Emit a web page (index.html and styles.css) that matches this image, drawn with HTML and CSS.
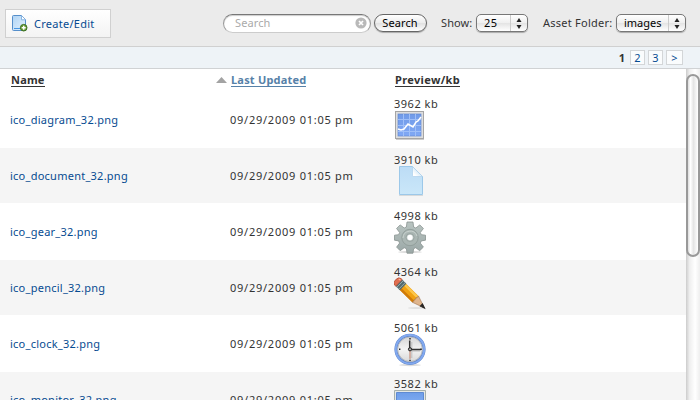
FILE: index.html
```html
<!DOCTYPE html>
<html lang="en">
<head>
<meta charset="utf-8">
<title>Assets</title>
<link rel="stylesheet" href="styles.css">
</head>
<body>
<div class="toolbar">
  <a class="create">
    <svg width="16" height="17" viewBox="0 0 16 17"><defs><linearGradient id="pg" x2="1" y2="1"><stop stop-color="#b0d4f4"/><stop offset="1" stop-color="#e2f1ff"/></linearGradient></defs><path d="M.5 1.5q0-1 1-1h8l4 4v11h-12q-1 0-1-1z" fill="url(#pg)" stroke="#568fcb"/><path d="M9.5.8v4h4" fill="#fff" stroke="#87b6e4"/><path d="M2 13.5h7" stroke="#4796e3"/><circle cx="11.7" cy="12.7" r="3.3" fill="#6b9e3a" stroke="#3c7022"/><path d="M9.7 12.7h4M11.7 10.7v4" stroke="#fff" stroke-width="1.4"/></svg>
    <span>Create/Edit</span>
  </a>
  <div class="search"><span>Search</span><svg width="12" height="12" viewBox="0 0 12 12"><circle cx="6" cy="6" r="5.6" fill="#b9b9b9"/><path d="M4 4l4 4M8 4L4 8" stroke="#fff" stroke-width="1.7"/></svg></div>
  <div class="button">Search</div>
  <span class="label show">Show:</span>
  <div class="select count"><span>25</span><i><svg width="6" height="11" viewBox="0 0 6 11"><path d="M.5 4L3 0l2.5 4zM.5 7L3 11l2.5-4z" fill="#222"/></svg></i></div>
  <span class="label folder">Asset Folder:</span>
  <div class="select images"><span>images</span><i><svg width="6" height="11" viewBox="0 0 6 11"><path d="M.5 4L3 0l2.5 4zM.5 7L3 11l2.5-4z" fill="#222"/></svg></i></div>
</div>
<div class="pager"><b>1</b><a>2</a><a>3</a><a>&gt;</a></div>
<div class="main">
  <div class="table">
    <div class="head">
      <div class="name"><span class="h-name">Name</span></div>
      <div class="date"><svg width="11" height="6" viewBox="0 0 11 6"><path d="M0 6L5.5 0 11 6z" fill="#a3a3a3"/></svg><span class="h-date">Last Updated</span></div>
      <div class="preview"><span class="h-preview">Preview/kb</span></div>
    </div>
    <div class="row"><div class="name">ico_diagram_32.png</div><div class="date">09/29/2009 01:05 pm</div><div class="preview"><span>3962 kb</span>
      <svg width="32" height="32" viewBox="0 0 32 32"><defs><linearGradient id="dg" x2="0" y2="1"><stop stop-color="#719be8"/><stop offset="1" stop-color="#80a8f4"/></linearGradient></defs><rect x="1.5" y="2.5" width="28" height="27" fill="#dedede" stroke="#a5a5a5"/><rect x="4" y="5" width="23" height="22" fill="url(#dg)" stroke="#668bd0" stroke-width=".7"/><path d="M9.5 5v22M15.5 5v22M21.5 5v22M4 10.5h23M4 16.5h23M4 22.5h23" stroke="#9fbff8"/><path d="M4 20l3 1 3-1 4-5 5 3 3-5 2-1 3-4" fill="none" stroke="#fff" stroke-width="1.5"/><path d="M2 30.5h28" stroke="#ccc"/></svg></div></div>
    <div class="row odd"><div class="name">ico_document_32.png</div><div class="date">09/29/2009 01:05 pm</div><div class="preview"><span>3910 kb</span>
      <svg width="32" height="32" viewBox="0 0 32 32"><defs><linearGradient id="doc" x2="0" y2="1"><stop stop-color="#bcdcf5"/><stop offset="1" stop-color="#cae7f9"/></linearGradient><linearGradient id="fold" x1=".2" y1=".8" x2=".8" y2=".2"><stop stop-color="#fff"/><stop offset="1" stop-color="#bcdcf2"/></linearGradient></defs><path d="M5.5 1.5h13l10 10v18h-23z" fill="url(#doc)" stroke="#9cc8e9"/><path d="M18.5 1.5l10 10h-9q-1 0-1-1z" fill="url(#fold)" stroke="#add0eb" stroke-width=".7"/><path d="M5 30.5h24" stroke="#d7dadb"/></svg></div></div>
    <div class="row"><div class="name">ico_gear_32.png</div><div class="date">09/29/2009 01:05 pm</div><div class="preview"><span>4998 kb</span>
      <svg width="32" height="34" viewBox="0 0 32 34"><defs><linearGradient id="gear" x2="0" y2="1"><stop stop-color="#b9c4c1"/><stop offset="1" stop-color="#9ba8a7"/></linearGradient></defs><ellipse cx="16" cy="31" rx="12" ry="1.2" fill="#ddd"/><path d="M13 1h6l.6 5 2.2 1 4-3.1 3.6 3.6-3.1 4 1 2.2 4.2.5v5l-4.2.7-1 2.2 3.1 4-3.7 3.6-4-3-2.1 1-.6 4.5h-6l-.6-4.5-2.2-1-4 3-3.6-3.6 3-4-1-2.2-4.1-.7v-5l4.1-.5 1-2.2-3-4 3.6-3.6 4 3.1 2.2-1z" fill="url(#gear)" stroke="#899390" stroke-width=".8"/><circle cx="16" cy="16.5" r="8.2" fill="#aab6b3" stroke="#8d9996" stroke-width=".8"/><path d="M9 17a7.2 7.2 0 0 1 14-2" fill="none" stroke="#c9d2cf"/><circle cx="16" cy="16.5" r="4" fill="#b9c4c1" stroke="#8e9996" stroke-width=".7"/><circle cx="16" cy="16.5" r="2.7" fill="#fff"/></svg></div></div>
    <div class="row odd"><div class="name">ico_pencil_32.png</div><div class="date">09/29/2009 01:05 pm</div><div class="preview"><span>4364 kb</span>
      <svg width="32" height="33" viewBox="0 0 32 33"><ellipse cx="22" cy="31" rx="8" ry="1" fill="#e1e1e1"/><g transform="translate(3.9 4.9) rotate(44.5)"><path d="M6 -4.4h18.5v8.8H6z" fill="#f0a112"/><path d="M6-4h18.5v2.4H6z" fill="#fcc64a"/><path d="M6 2h18.5v2.4H6z" fill="#cf7a0a"/><path d="M24.5-4.4L37.2 0 24.5 4.4q1.2-2-.4-3 1.4-1.3 0-2.8 1.4-1.5.4-3z" fill="#dfb58d" stroke="#93633c" stroke-width=".5"/><path d="M33-1.5L37.4 0 33 1.5z" fill="#252525" stroke="#252525"/><rect x="1.3" y="-4.6" width="6" height="9.2" fill="#536c70"/><path d="M3-4.6v9.2M5.7-4.6v9.2" stroke="#a6b5b4" stroke-width=".8"/><path d="M1.4-4.6H0Q-3.2-4.4-3.2 0T0 4.6h1.4z" fill="#df6e50" stroke="#ac442c" stroke-width=".6"/><path d="M-1.5-2.7L.7-3" stroke="#ffb69b" stroke-width="1.2"/></g></svg></div></div>
    <div class="row"><div class="name">ico_clock_32.png</div><div class="date">09/29/2009 01:05 pm</div><div class="preview"><span>5061 kb</span>
      <svg width="33" height="34" viewBox="0 0 33 34"><defs><linearGradient id="face" x2="0" y2="1"><stop stop-color="#d2d2d2"/><stop offset=".5" stop-color="#f4f4f4"/><stop offset="1" stop-color="#d5d5d5"/></linearGradient></defs><ellipse cx="16" cy="32" rx="11" ry="1.2" fill="#ddd"/><circle cx="16" cy="16.3" r="14.1" fill="url(#face)" stroke="#5d83c8" stroke-width="3"/><circle cx="16" cy="16.3" r="14.2" fill="none" stroke="#82a9ef" stroke-width="2"/><circle cx="16" cy="16.3" r="12.3" fill="none" stroke="#a5a9af" stroke-width=".7"/><path d="M17.8 9v16M18 18h8" stroke="#bcbcbc"/><path d="M16 16.3v9.5" stroke="#bd7860"/><path d="M15.7 7.5v9H27" fill="none" stroke="#333" stroke-width="1.5"/><circle cx="16" cy="16.3" r="1.6" fill="#aaa" stroke="#222"/><path d="M15.3 5h1.4v1.4h-1.4zM15.3 26.7h1.4v1.4h-1.4zM5 15.6h1.4V17H5zM26.4 15.6h1.4V17h-1.4z" fill="#222"/></svg></div></div>
    <div class="row odd"><div class="name">ico_monitor_32.png</div><div class="date">09/29/2009 01:05 pm</div><div class="preview"><span>3582 kb</span>
      <svg width="32" height="32" viewBox="0 0 32 32"><defs><linearGradient id="mon" x2="0" y2="1"><stop stop-color="#6d9de9"/><stop offset="1" stop-color="#8fb9fa"/></linearGradient></defs><path d="M.5 1.5h31v24H.5z" fill="#e4e8e5" stroke="#a6b0ac"/><path d="M2.5 3.5h27v20h-27z" fill="url(#mon)" stroke="#5e8ad2"/></svg></div></div>
  </div>
  <div class="scrollbar"><div class="thumb"></div></div>
</div>
</body>
</html>
```
FILE: styles.css
```css
* { box-sizing: border-box; }
body {
  margin: 0; width: 700px; height: 400px; overflow: hidden;
  background: #fff; color: #333;
  font: 11px/14px "Noto Sans", "Open Sans", sans-serif;
  display: flex; flex-direction: column;
}
svg { display: block; flex: none; }
.toolbar {
  height: 47px; flex: none; display: flex; align-items: center;
  background: #ebebeb; border-bottom: 1px solid #d0d0d0; padding-left: 5px;
}
.create {
  width: 106px; height: 29px; flex: none; display: flex; align-items: center; gap: 6px;
  margin-top: 1px; padding-left: 6px; border: 1px solid #d0d0d0;
  background: linear-gradient(#fff, #f3f3f3); color: #064b91; letter-spacing: .27px;
}
.search {
  width: 148px; height: 19px; flex: none; margin-left: 112px; padding: 0 3px 0 11px;
  display: flex; align-items: center; justify-content: space-between;
  border: 1px solid #999; border-top-color: #777; border-bottom-color: #ccc; border-radius: 10px;
  background: #fff; box-shadow: inset 0 1px 1px #ccc; color: #aaa; letter-spacing: .1px;
}
.button {
  width: 53px; height: 18px; flex: none; margin-left: 2.5px;
  border: 1px solid #666; border-radius: 9px; line-height: 16px; text-align: center;
  background: linear-gradient(#fff, #ededed 48%, #e1e1e1 52%, #fff);
  box-shadow: 0 1px 1px #aaa; color: #000; letter-spacing: .1px;
}
.label { flex: none; white-space: nowrap; letter-spacing: .25px; }
.show { width: 31px; margin-left: 14.5px; letter-spacing: .1px; }
.folder { width: 69px; margin-left: 15px; }
.select {
  height: 18px; flex: none; display: flex; align-items: center; justify-content: space-between;
  border: 1px solid #777; border-radius: 5px; padding-left: 7px; color: #000;
  background: linear-gradient(#fff, #f0f0f0 48%, #e4e4e4 52%, #fff); box-shadow: 0 1px 1px #aaa;
}
.select i { width: 17px; height: 16px; display: flex; align-items: center; justify-content: center; border-left: 1px solid #ccc; }
.count { width: 52px; margin-left: 4px; letter-spacing: .4px; }
.images { width: 70px; margin-left: 4px; }
.pager {
  height: 22px; flex: none; display: flex; align-items: center; justify-content: flex-end;
  gap: 3px; padding-right: 17px; background: #eef3f7; border-bottom: 1px solid #d0d2d4;
}
.pager b { margin-right: 2px; }
.pager a {
  width: 15px; height: 15px; border: 1px solid #d3d6d8; background: #fafcfd;
  line-height: 13px; text-align: center; color: #064b91;
}
.pager a:last-child { width: 17px; }
.main { flex: 1; min-height: 0; display: flex; }
.table { width: 686px; flex: none; overflow: hidden; }
.head, .row { display: grid; grid-template-columns: 230px 164px 1fr; }
.head { height: 23px; align-items: start; padding-top: 4px; font-weight: bold; letter-spacing: .2px; }
.name { padding-left: 10px; white-space: nowrap; }
.head .name { padding-left: 11px; }
.date { white-space: nowrap; }
.head .date { display: flex; gap: 4px; align-items: center; margin-left: -14px; }
.head span { border-bottom: 1px solid currentColor; height: 14px; display: inline-block; }
.head .preview { padding-left: 1px; letter-spacing: .35px; }
.h-date { color: #5681a8; }
.row { height: 56px; align-items: center; }
.odd { background: #f5f5f5; border-bottom: 1px solid #fff; }
.row .name { color: #064b91; letter-spacing: .25px; }
.row .date { letter-spacing: .75px; }
.row .preview { height: 56px; align-self: start; padding-top: 5px; letter-spacing: .5px; }
.row .preview span { display: block; height: 12px; }
.scrollbar { width: 14px; padding-top: 5px; background: linear-gradient(90deg, #ccc, #eee 25%, #fff 65%, #eee); }
.thumb {
  width: 14px; height: 183px; border: 2px solid #999; border-radius: 7px;
  background: linear-gradient(90deg, #ddd, #fff 25%, #e5e5e5 55%, #fff);
}
```
